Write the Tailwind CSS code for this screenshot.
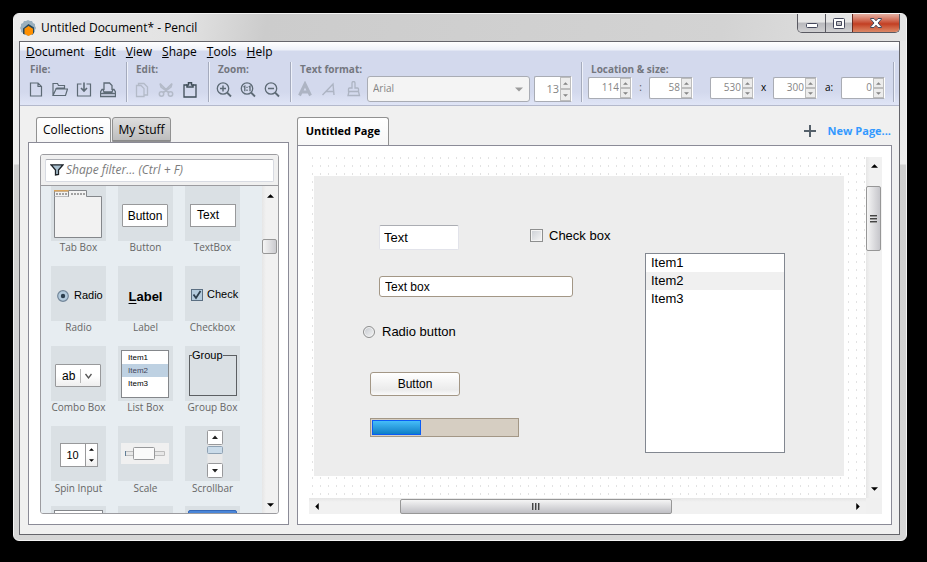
<!DOCTYPE html>
<html lang="en">
<head>
	<meta charset="UTF-8">
	<meta name="viewport" content="width=device-width, initial-scale=1.0">
	<title>Untitled Document* - Pencil</title>
	<script src="https://cdn.jsdelivr.net/npm/@tailwindcss/browser@4"></script>
</head>
<body class="bg-black font-['Open_Sans',sans-serif] text-xs text-black">
<!-- Shared arrow glyphs -->
<svg class="hidden">
	<symbol id="arrow-up" viewBox="0 0 8 4"><path d="M0 4 4 0 8 4z"></path></symbol>
	<symbol id="arrow-down" viewBox="0 0 8 4"><path d="M0 0h8L4 4z"></path></symbol>
	<symbol id="arrow-left" viewBox="0 0 4 8"><path d="M4 0v8L0 4z"></path></symbol>
	<symbol id="arrow-right" viewBox="0 0 4 8"><path d="M0 0v8l4-4z"></path></symbol>
</svg>

<div class="h-screen pt-[13px] pl-[13px] pr-5 pb-[21px]">
<div class="relative h-full flex flex-col rounded-md border border-[#f4f4f4] bg-[linear-gradient(#e4e4e4,#eeeeee_150px,#cfcfcf_151px,#d6d6d6)] pl-[5px] pr-[6px] pb-[5px]">

	<!-- Title bar -->
	<header class="h-[27px] -ml-[5px] -mr-[6px] shrink-0 flex items-center rounded-t-md bg-[linear-gradient(100deg,#ececec,#e2e2e2_170px,#cccccc_250px,#d3d3d3_700px,#e4e4e4)] pl-[6px]">
		<svg class="w-4 h-4" viewBox="0 0 16 16">
			<path d="M8 0l2 1 2 0 1 2 2 1 0 2 1 2-1 2 0 2-2 1-1 2-2 0-2 1-2-1-2 0-1-2-2-1 0-2-1-2 1-2 0-2 2-1 1-2 2 0z" fill="#9ab0be"></path>
			<path d="M3 14V8.500L8.500 4 14 7.500V13l-2 2V9L8.500 6.500 5 9v5z" fill="#26485c"></path>
			<path d="M8.500 6 13 8.700v5L8.500 16 4.500 13.700v-5z" fill="#ff9000"></path>
		</svg>
		<h1 class="pl-[5px]">Untitled Document* - Pencil</h1>
		<div class="ml-auto mr-[6px] self-start flex h-[19px] rounded-b-[5px] border border-t-0 border-[#5a5a62] overflow-hidden">
			<button aria-label="Minimize" class="w-7 flex items-center justify-center border-r border-[#5a5a62] bg-linear-to-b from-[#e6e6e6] from-45% via-[#b9b9bd] via-50% to-[#d0d0d2]">
				<svg class="w-3 h-3 mt-1" viewBox="0 0 12 12"><rect x=".5" y="4.500" width="11" height="4" rx="1" fill="#fff" stroke="#45485c"></rect></svg>
			</button>
			<button aria-label="Maximize" class="w-[27px] flex items-center justify-center border-r border-[#6b2a20] bg-linear-to-b from-[#e6e6e6] from-45% via-[#b9b9bd] via-50% to-[#d0d0d2]">
				<svg class="w-3 h-[11px]" viewBox="0 0 12 11"><path d="M1.500.5h9a1 1 0 0 1 1 1v8a1 1 0 0 1-1 1h-9a1 1 0 0 1-1-1v-8a1 1 0 0 1 1-1zM3.500 3.500v4h5v-4z" fill="#fff" fill-rule="evenodd" stroke="#45485c"></path></svg>
			</button>
			<button aria-label="Close" class="w-[46px] flex items-center justify-center bg-linear-to-b from-[#e3a798] from-5% via-[#c23e22] via-55% to-[#dc8866]">
				<svg class="w-3 h-[10px]" viewBox="0 0 12 10"><path d="M.5.5h3.500L6 2.800 8 .5h3.500v.6L8 5l3.500 3.900v.6H8L6 7.200 4 9.500H.5v-.6L4 5 .5 1.100z" fill="#fff" stroke="#45485c"></path></svg>
			</button>
		</div>
	</header>

	<div class="flex-1 min-h-0 flex flex-col border border-[#65656b] bg-[#f0f0f0]">

		<!-- Menu and toolbar -->
		<div class="shrink-0 border-b border-[#b4b9cc] bg-[linear-gradient(#ffffff,#eef1f9_8px,#d3d9ed_9px,#d3d9ed_50px,#e0e5f6)]">
			<nav class="h-5 flex items-center gap-[10px] pl-[6px]">
				<a href="#"><u>D</u>ocument</a>
				<a href="#"><u>E</u>dit</a>
				<a href="#"><u>V</u>iew</a>
				<a href="#"><u>S</u>hape</a>
				<a href="#"><u>T</u>ools</a>
				<a href="#"><u>H</u>elp</a>
			</nav>
			<div class="flex h-10 mb-[3px] text-[#5d6a75]">
				<section class="border-r border-[#a5abbd] shadow-[1px_0_0_#eef1fa] pl-1 pr-[6px]">
					<h2 class="h-4 pl-[6px] text-[10px] leading-[14px] font-bold text-[#74777f]">File:</h2>
					<div class="flex">
						<button aria-label="New" class="w-6 h-6 flex items-center justify-center">
							<svg class="w-4 h-4" viewBox="0 0 16 16" fill="none" stroke="currentColor" stroke-width="1.200"><path d="M2.500 1h7.500l3.500 3.500V14h-11zM10 1v3.500h3.500"></path></svg>
						</button>
						<button aria-label="Open" class="w-6 h-6 flex items-center justify-center">
							<svg class="w-4 h-4" viewBox="0 0 16 16" fill="none" stroke="currentColor" stroke-width="1.200"><path d="M1 13.500V1.500h4.500l1 2h6v3M1 13.500h12.500l2-6.500H4zM3.500 7l1.500-1h7.500"></path></svg>
						</button>
						<button aria-label="Save" class="w-6 h-6 flex items-center justify-center">
							<svg class="w-4 h-4" viewBox="0 0 16 16" fill="none" stroke="currentColor" stroke-width="1.200"><path d="M5.500 2h-4v12h13V2h-4"></path><path d="M8 .5v8M5 6l3 3 3-3" stroke-width="1.600"></path></svg>
						</button>
						<button aria-label="Print" class="w-6 h-6 flex items-center justify-center">
							<svg class="w-4 h-4" viewBox="0 0 16 16" fill="none" stroke="currentColor" stroke-width="1.300"><path d="M4 8V1h5.500L12 3.500V8M2 7.500h1l1 2.500h8l1-2.500h1l1.500 2.500v4.500H.5V10zM.5 11.500h15"></path></svg>
						</button>
					</div>
				</section>
				<section class="border-r border-[#a5abbd] shadow-[1px_0_0_#eef1fa] pl-[3px] pr-[6px]">
					<h2 class="h-4 pl-[6px] text-[10px] leading-[14px] font-bold text-[#74777f]">Edit:</h2>
					<div class="flex">
						<button aria-label="Copy" disabled class="w-6 h-6 flex items-center justify-center text-[#b3bac8]">
							<svg class="w-4 h-4" viewBox="0 0 16 16" fill="none" stroke="currentColor" stroke-width="1.300"><path d="M2.500 3.500h4.500L10 6.500v8H2.500zM4.500 3.500v-2H10L13.500 5v8H10"></path></svg>
						</button>
						<button aria-label="Cut" disabled class="w-6 h-6 flex items-center justify-center text-[#b3bac8]">
							<svg class="w-4 h-4" viewBox="0 0 16 16" fill="none" stroke="currentColor" stroke-width="1.500"><circle cx="3.500" cy="12" r="2.200"></circle><circle cx="12.500" cy="12" r="2.200"></circle><path d="M2 1.500 3 5l8 6M14 1.500 13 5l-8 6M2 1.500l9 9M14 1.500l-9 9"></path></svg>
						</button>
						<button aria-label="Paste" class="w-6 h-6 flex items-center justify-center text-[#3f4d58]">
							<svg class="w-4 h-4" viewBox="0 0 16 16" fill="none" stroke="currentColor" stroke-width="1.300"><path d="M5 3H2v12h12V3h-3"></path><path d="M5 5V3h1.500V.8h3V3H11v2z" stroke-width="1.500"></path></svg>
						</button>
					</div>
				</section>
				<section class="border-r border-[#a5abbd] shadow-[1px_0_0_#eef1fa] pl-[3px] pr-[6px]">
					<h2 class="h-4 pl-[6px] text-[10px] leading-[14px] font-bold text-[#74777f]">Zoom:</h2>
					<div class="flex">
						<button aria-label="Zoom in" class="w-6 h-6 flex items-center justify-center">
							<svg class="w-4 h-4" viewBox="0 0 16 16" fill="none" stroke="currentColor" stroke-width="1.300"><circle cx="7" cy="6.500" r="5.700"></circle><path d="M4 6.500h6M7 3.500v6" stroke-width="1.500"></path><path d="M11 10.500l4 4" stroke-width="1.800"></path></svg>
						</button>
						<button aria-label="Actual size" class="w-6 h-6 flex items-center justify-center">
							<svg class="w-4 h-4" viewBox="0 0 16 16" fill="none" stroke="currentColor" stroke-width="1.300"><circle cx="7" cy="6.500" r="5.700"></circle><path d="M3.500 5l1.300-.8v5M8.700 5l1.300-.8v5M7 4.800v1.300M7 7.600v1.300"></path><path d="M11 10.500l4 4" stroke-width="1.800"></path></svg>
						</button>
						<button aria-label="Zoom out" class="w-6 h-6 flex items-center justify-center">
							<svg class="w-4 h-4" viewBox="0 0 16 16" fill="none" stroke="currentColor" stroke-width="1.300"><circle cx="7" cy="6.500" r="5.700"></circle><path d="M4 6.500h6" stroke-width="1.500"></path><path d="M11 10.500l4 4" stroke-width="1.800"></path></svg>
						</button>
					</div>
				</section>
				<section class="border-r border-[#a5abbd] shadow-[1px_0_0_#eef1fa] pl-[2px] pr-[9px]">
					<h2 class="h-[14px] pl-[7px] text-[10px] leading-[14px] font-bold text-[#74777f]">Text format:</h2>
					<div class="flex items-center text-[#adb4c3]">
						<button aria-label="Bold" disabled class="w-6 h-6 flex items-center justify-center">
							<svg class="w-4 h-4" viewBox="0 0 16 16" fill="none" stroke="currentColor" stroke-width="3"><path d="M2.500 14.500 8 3l5.500 11.500M4.500 11h7"></path></svg>
						</button>
						<button aria-label="Italic" disabled class="w-6 h-6 flex items-center justify-center">
							<svg class="w-4 h-4" viewBox="0 0 16 16" fill="none" stroke="currentColor" stroke-width="1.400"><path d="M1.500 14 12 3l1 11M5 10.500h7.500"></path></svg>
						</button>
						<button aria-label="Format painter" disabled class="w-6 h-6 flex items-center justify-center">
							<svg class="w-4 h-4" viewBox="0 0 16 16" fill="none" stroke="currentColor" stroke-width="1.300"><path d="M7 7V2a1.500 1.500 0 0 1 3 0v5h2.500a1 1 0 0 1 1 1v2.500h-10V8a1 1 0 0 1 1-1zM4 10.500l-1 4h11.500l-1-4"></path></svg>
						</button>
						<div class="relative ml-[2px]">
							<select aria-label="Font" disabled class="w-[163px] h-[26px] appearance-none rounded-[3px] border border-[#a9acb4] bg-[#f4f4f4] pl-[5px] text-[10px] text-[#858585] opacity-100">
								<option>Arial</option>
							</select>
							<svg class="absolute right-[7px] top-[11px] w-2 h-[5px] fill-[#9b9b9b]"><use href="#arrow-down"></use></svg>
						</div>
						<div class="ml-1 flex w-[38px] h-[26px] rounded-l-xs border border-r-white border-[#a9acb4] bg-white">
							<input aria-label="Font size" disabled value="13" class="flex-1 min-w-0 pr-px text-right text-[11px] text-[#858585]">
							<div class="w-[11px] flex flex-col">
								<button aria-label="Larger" disabled class="flex-1 flex items-center justify-center border border-[#bdbdbd] bg-[#ececec]"><svg class="w-[5px] h-[3px] fill-[#858585]"><use href="#arrow-up"></use></svg></button>
								<button aria-label="Smaller" disabled class="flex-1 flex items-center justify-center border border-[#bdbdbd] bg-[#ececec]"><svg class="w-[5px] h-[3px] fill-[#858585]"><use href="#arrow-down"></use></svg></button>
							</div>
						</div>
					</div>
				</section>
				<section class="border-r border-[#a5abbd] shadow-[1px_0_0_#eef1fa] pl-[6px] pr-2">
					<h2 class="h-[15px] pl-[3px] text-[10px] leading-[14px] font-bold text-[#74777f]">Location &amp; size:</h2>
					<div class="flex items-center text-[10px] text-black">
						<div class="flex w-11 h-[22px] rounded-l-xs border border-r-white border-[#a9acb4] bg-white">
							<input aria-label="X" disabled value="114" class="flex-1 min-w-0 pr-px text-right text-[#858585]">
							<div class="w-[11px] flex flex-col">
								<button aria-label="Increase X" disabled class="flex-1 flex items-center justify-center border border-[#bdbdbd] bg-[#ececec]"><svg class="w-[5px] h-[3px] fill-[#858585]"><use href="#arrow-up"></use></svg></button>
								<button aria-label="Decrease X" disabled class="flex-1 flex items-center justify-center border border-[#bdbdbd] bg-[#ececec]"><svg class="w-[5px] h-[3px] fill-[#858585]"><use href="#arrow-down"></use></svg></button>
							</div>
						</div>
						<span class="w-[17px] text-center text-[#555555]">:</span>
						<div class="flex w-11 h-[22px] rounded-l-xs border border-r-white border-[#a9acb4] bg-white">
							<input aria-label="Y" disabled value="58" class="flex-1 min-w-0 pr-px text-right text-[#858585]">
							<div class="w-[11px] flex flex-col">
								<button aria-label="Increase Y" disabled class="flex-1 flex items-center justify-center border border-[#bdbdbd] bg-[#ececec]"><svg class="w-[5px] h-[3px] fill-[#858585]"><use href="#arrow-up"></use></svg></button>
								<button aria-label="Decrease Y" disabled class="flex-1 flex items-center justify-center border border-[#bdbdbd] bg-[#ececec]"><svg class="w-[5px] h-[3px] fill-[#858585]"><use href="#arrow-down"></use></svg></button>
							</div>
						</div>
						<div class="ml-[17px] flex w-11 h-[22px] rounded-l-xs border border-r-white border-[#a9acb4] bg-white">
							<input aria-label="Width" disabled value="530" class="flex-1 min-w-0 pr-px text-right text-[#858585]">
							<div class="w-[11px] flex flex-col">
								<button aria-label="Increase width" disabled class="flex-1 flex items-center justify-center border border-[#bdbdbd] bg-[#ececec]"><svg class="w-[5px] h-[3px] fill-[#858585]"><use href="#arrow-up"></use></svg></button>
								<button aria-label="Decrease width" disabled class="flex-1 flex items-center justify-center border border-[#bdbdbd] bg-[#ececec]"><svg class="w-[5px] h-[3px] fill-[#858585]"><use href="#arrow-down"></use></svg></button>
							</div>
						</div>
						<span class="w-[19px] text-center">x</span>
						<div class="flex w-11 h-[22px] rounded-l-xs border border-r-white border-[#a9acb4] bg-white">
							<input aria-label="Height" disabled value="300" class="flex-1 min-w-0 pr-px text-right text-[#858585]">
							<div class="w-[11px] flex flex-col">
								<button aria-label="Increase height" disabled class="flex-1 flex items-center justify-center border border-[#bdbdbd] bg-[#ececec]"><svg class="w-[5px] h-[3px] fill-[#858585]"><use href="#arrow-up"></use></svg></button>
								<button aria-label="Decrease height" disabled class="flex-1 flex items-center justify-center border border-[#bdbdbd] bg-[#ececec]"><svg class="w-[5px] h-[3px] fill-[#858585]"><use href="#arrow-down"></use></svg></button>
							</div>
						</div>
						<label for="angle" class="w-6 text-center">a:</label>
						<div class="flex w-11 h-[22px] rounded-l-xs border border-r-white border-[#a9acb4] bg-white">
							<input id="angle" disabled value="0" class="flex-1 min-w-0 pr-px text-right text-[#858585]">
							<div class="w-[11px] flex flex-col">
								<button aria-label="Increase angle" disabled class="flex-1 flex items-center justify-center border border-[#bdbdbd] bg-[#ececec]"><svg class="w-[5px] h-[3px] fill-[#858585]"><use href="#arrow-up"></use></svg></button>
								<button aria-label="Decrease angle" disabled class="flex-1 flex items-center justify-center border border-[#bdbdbd] bg-[#ececec]"><svg class="w-[5px] h-[3px] fill-[#858585]"><use href="#arrow-down"></use></svg></button>
							</div>
						</div>
					</div>
				</section>
			</div>
		</div>

		<div class="flex-1 min-h-0 flex gap-2 pt-[11px] pl-2 pr-[7px] pb-[9px]">

			<!-- Shape collections -->
			<aside class="w-[261px] shrink-0 flex flex-col">
				<div class="flex gap-px pl-2">
					<button class="w-[75px] h-[25px] rounded-t-[3px] border border-b-0 border-[#919191] bg-linear-to-b from-white to-[#f7f7f7]">Collections</button>
					<button class="w-[59px] h-[25px] rounded-t-[3px] border border-[#919191] bg-linear-to-b from-[#dedede] to-[#bcbcbc] shadow-[inset_0_-1px_0_#8a8a8a]">My Stuff</button>
				</div>
				<div class="flex-1 min-h-0 border border-[#8b8b97] bg-white pt-[11px] pl-[11px] pr-[9px] pb-[10px]">
					<div class="h-full flex flex-col overflow-hidden rounded-[3px] border border-[#9c9ca0]">
						<div class="h-[31px] shrink-0 flex items-center border-b border-[#9c9ca0] bg-[#f0f0f0] px-1">
							<div class="w-full h-[23px] flex items-center rounded-xs border border-[#d8dbe2] border-t-[#abadb3] bg-white pl-1">
								<svg class="w-[14px] h-3 shrink-0" viewBox="0 0 14 12"><path d="M1 .8h12L8.500 6v4.500L5.500 11V6z" fill="#a9c0cf" stroke="#1d2328" stroke-width="1.300"></path></svg>
								<input aria-label="Shape filter" placeholder="Shape filter... (Ctrl + F)" class="flex-1 min-w-0 pl-[2px] italic placeholder:text-[#7c7c7c] outline-none">
							</div>
						</div>
						<div class="flex-1 min-h-0 flex">
							<div class="flex-1 overflow-hidden bg-[#e7edf1] pl-[10px]">
								<div class="grid grid-cols-[55px_55px_55px] gap-x-3 gap-y-2 text-[10px] text-[#666666]">
									<figure>
										<div class="h-[55px] flex bg-[#dae0e4] pl-[3px] pt-1">
											<svg class="w-12 h-12" viewBox="0 0 48 48"><path d="M.5 6.500h14v-6h18v6h15v41H.5z" fill="#f2f2f2" stroke="#84878b"></path><path d="M.5 6.500V1h14v5.500" fill="#f2f2f2" stroke="#84878b"></path><path d="M0 .5h14.500" stroke="#d9a45c" stroke-width="2"></path><path d="M2 4h11M17 4h14" stroke="#a2a2a2" stroke-width="2" stroke-dasharray="2 1"></path></svg>
										</div>
										<figcaption class="h-[17px] leading-3 text-center whitespace-nowrap">Tab Box</figcaption>
									</figure>
									<figure>
										<div class="h-[55px] flex items-center bg-[#dae0e4] pl-1 pt-1">
											<div class="w-[46px] h-[23px] rounded-[1px] border border-[#98999b] bg-white text-center leading-[22px] font-['Liberation_Sans',sans-serif] text-xs text-black">Button</div>
										</div>
										<figcaption class="h-[17px] leading-3 text-center whitespace-nowrap">Button</figcaption>
									</figure>
									<figure>
										<div class="h-[55px] flex items-center bg-[#dae0e4] pl-[5px] pt-1">
											<div class="w-[46px] h-[23px] border border-[#98999b] bg-white pl-[6px] leading-[21px] font-['Liberation_Sans',sans-serif] text-xs text-black">Text</div>
										</div>
										<figcaption class="h-[17px] leading-3 text-center whitespace-nowrap">TextBox</figcaption>
									</figure>

									<figure>
										<div class="h-[55px] flex items-center gap-[5px] bg-[#dae0e4] pl-[6px] pt-1">
											<svg class="w-3 h-3 shrink-0" viewBox="0 0 12 12"><circle cx="6" cy="6" r="5.300" fill="#b4cbdd" stroke="#73879a" stroke-width="1.200"></circle><circle cx="6" cy="6" r="2.200" fill="#2d3f4e"></circle></svg>
											<span class="font-['Liberation_Sans',sans-serif] text-[11px] text-black">Radio</span>
										</div>
										<figcaption class="h-[17px] leading-3 text-center whitespace-nowrap">Radio</figcaption>
									</figure>
									<figure>
										<div class="h-[55px] flex items-center justify-center bg-[#dae0e4] pt-[6px]">
											<span class="font-['Liberation_Sans',sans-serif] text-[13px] font-bold text-black"><u class="underline-offset-2">L</u>abel</span>
										</div>
										<figcaption class="h-[17px] leading-3 text-center whitespace-nowrap">Label</figcaption>
									</figure>
									<figure>
										<div class="h-[55px] flex items-center gap-1 bg-[#dae0e4] pl-[6px] pt-[2px]">
											<svg class="w-3 h-3 shrink-0" viewBox="0 0 12 12"><rect x=".5" y=".5" width="11" height="11" fill="#b4cbdd" stroke="#5b6f82"></rect><path d="M2.500 5.500 5 9l4.500-7" fill="none" stroke="#2d3f4e" stroke-width="1.800"></path></svg>
											<span class="font-['Liberation_Sans',sans-serif] text-[11px] text-black">Check</span>
										</div>
										<figcaption class="h-[17px] leading-3 text-center whitespace-nowrap">Checkbox</figcaption>
									</figure>

									<figure>
										<div class="h-[55px] flex items-center bg-[#dae0e4] pl-1 pt-1">
											<div class="w-[46px] h-[23px] flex items-center rounded-[1px] border border-[#98999b] bg-linear-to-b from-white from-50% to-[#eeeeee] pl-[6px]">
												<span class="w-[18px] font-['Liberation_Sans',sans-serif] text-xs text-black">ab</span>
												<svg class="w-3 h-[14px]" viewBox="0 0 12 14" fill="none"><path d="M.5 0v14" stroke="#b5b5b5"></path><path d="M5.500 5 8.500 9l3-4" stroke="#555" stroke-width="1.300"></path></svg>
											</div>
										</div>
										<figcaption class="h-[17px] leading-3 text-center whitespace-nowrap">Combo Box</figcaption>
									</figure>
									<figure>
										<div class="h-[55px] flex bg-[#dae0e4] pl-[3px] pt-1">
											<div class="w-12 h-12 border border-[#84878b] bg-white font-['Liberation_Sans',sans-serif] text-[8px] leading-[13px] text-black">
												<div class="pl-[6px]">Item1</div>
												<div class="bg-[#bed1e2] pl-[6px] text-[#44445a]">Item2</div>
												<div class="pl-[6px]">Item3</div>
											</div>
										</div>
										<figcaption class="h-[17px] leading-3 text-center whitespace-nowrap">List Box</figcaption>
									</figure>
									<figure>
										<div class="h-[55px] bg-[#dae0e4] pl-1 pr-[3px] pt-[3px]">
											<fieldset class="h-[47px] border border-[#5c5f62]">
												<legend class="ml-[2px] font-['Liberation_Sans',sans-serif] text-[11px] leading-3 text-black">Group</legend>
											</fieldset>
										</div>
										<figcaption class="h-[17px] leading-3 text-center whitespace-nowrap">Group Box</figcaption>
									</figure>

									<figure>
										<div class="h-[55px] flex items-center justify-center bg-[#dae0e4] pt-[2px]">
											<div class="w-[38px] h-6 flex border border-[#98999b] bg-white">
												<span class="w-[25px] border-r border-[#98999b] text-center leading-[23px] font-['Liberation_Sans',sans-serif] text-[11px] text-black">10</span>
												<div class="flex-1 flex flex-col items-center justify-around bg-linear-to-b from-white from-50% to-[#eeeeee]">
													<svg class="w-[5px] h-[3px]"><use href="#arrow-up"></use></svg>
													<svg class="w-[5px] h-[3px]"><use href="#arrow-down"></use></svg>
												</div>
											</div>
										</div>
										<figcaption class="h-[17px] leading-[14px] text-center whitespace-nowrap">Spin Input</figcaption>
									</figure>
									<figure>
										<div class="h-[55px] flex items-center bg-[#dae0e4] pl-[3px]">
											<svg class="w-12 h-[21px]" viewBox="0 0 48 21"><path d="M0 0h48v21H0z" fill="#f0f0f0"></path><path d="M4.500 8.500h39v4h-39z" fill="#e7e7e7" stroke="#bdbdbd"></path><path d="M4.500 8v5" stroke="#5f7d96"></path><rect x="12.500" y="4.500" width="21" height="12" rx="1" fill="#fafafa" stroke="#98999b"></rect></svg>
										</div>
										<figcaption class="h-[17px] leading-[14px] text-center whitespace-nowrap">Scale</figcaption>
									</figure>
									<figure>
										<div class="h-[55px] flex items-center justify-center bg-[#dae0e4] pl-1">
											<svg class="w-4 h-12" viewBox="0 0 16 48"><path d="M.5 0h15v48H.5z" fill="#e9e9e9"></path><rect x=".5" y=".5" width="15" height="14" rx="1" fill="#fff" stroke="#98999b"></rect><rect x=".5" y="33.500" width="15" height="14" rx="1" fill="#fff" stroke="#98999b"></rect><rect x=".5" y="16.500" width="15" height="7" rx="1" fill="#cadbe9" stroke="#8fa2b3"></rect><path d="M5 9 8 5.500 11 9zM5 39h6l-3 3.500z" fill="#222"></path></svg>
										</div>
										<figcaption class="h-[17px] leading-[14px] text-center whitespace-nowrap">Scrollbar</figcaption>
									</figure>

									<div class="h-[55px] bg-[#dae0e4] px-[3px] pt-1"><div class="h-12 border border-[#84878b] bg-white"></div></div>
									<div class="h-[55px] bg-[#dae0e4]"></div>
									<div class="h-[55px] bg-[#dae0e4] px-[3px] pt-1"><div class="h-12 rounded-t-xs border border-[#3568b8] bg-[#4a86d8]"></div></div>
								</div>
							</div>
							<div class="w-4 shrink-0 flex flex-col items-center bg-[linear-gradient(90deg,#e6e6e6,#f1f1f1_4px)] pt-2 pb-[6px]">
								<svg class="w-[7px] h-1"><use href="#arrow-up"></use></svg>
								<div class="mt-[41px] w-[15px] h-[15px] self-start rounded-xs border border-[#979797] bg-linear-to-r from-[#f5f5f5] to-[#cbcbcf]"></div>
								<svg class="mt-auto w-[7px] h-1"><use href="#arrow-down"></use></svg>
							</div>
						</div>
					</div>
				</div>
			</aside>

			<!-- Document page -->
			<main class="flex-1 min-w-0 flex flex-col">
				<div class="flex justify-between">
					<button class="w-[92px] h-[28px] rounded-t-[3px] border border-b-0 border-[#919191] bg-linear-to-b from-white to-[#f7f7f7] text-[11px] font-bold">Untitled Page</button>
					<button class="flex items-center gap-3 pr-px text-[11px] font-bold text-[#3399ff]">
						<svg class="w-3 h-3" viewBox="0 0 12 12"><path d="M6 0v12M0 6h12" stroke="#55606a" stroke-width="2"></path></svg>
						New Page...
					</button>
				</div>
				<div class="flex-1 min-h-0 grid grid-cols-[1fr_16px] grid-rows-[1fr_16px] border border-[#8b8b97] bg-white pt-[11px] pl-[11px] pr-[9px] pb-[10px]">
					<div class="overflow-hidden bg-[conic-gradient(from_90deg_at_7px_6px,#e2e2e2_90deg,transparent_0)] bg-[size:8px_8px] bg-[position:-4px_-6px] pl-[5px] pt-[19px]">
						<div class="relative w-[530px] h-[300px] bg-[#ededed] font-['Liberation_Sans',sans-serif] text-[13px]">
							<input aria-label="Text" value="Text" class="absolute left-[65px] top-[49px] w-20 h-[25px] rounded-xs border border-[#e2e3ea] border-t-[#abadb3] bg-white pl-1">
							<input aria-label="Text box" value="Text box" class="absolute left-[65px] top-[100px] w-[194px] h-[21px] rounded-[3px] border border-[#a39786] bg-white pl-[5px] text-xs">
							<label class="absolute left-[216px] top-[51px] flex items-center gap-[6px]">
								<input type="checkbox" class="w-[13px] h-[13px] appearance-none border border-[#8e8f8f] bg-linear-to-br from-[#cbcfd5] to-[#f6f6f6] shadow-[inset_0_0_0_1px_#f4f4f4]">
								Check box
							</label>
							<label class="absolute left-[49px] top-[147px] flex items-center gap-[7px]">
								<input type="radio" name="page-radio" class="w-3 h-3 appearance-none rounded-full border border-[#8e8f8f] bg-linear-to-br from-[#c3c7cd] to-[#f6f6f6] shadow-[inset_0_0_0_1px_#f4f4f4]">
								Radio button
							</label>
							<button class="absolute left-[56px] top-[196px] w-[90px] h-6 rounded-[3px] border border-[#a39786] bg-linear-to-b from-white via-[#ebebeb] via-75% to-[#fafafa] text-xs">Button</button>
							<div role="progressbar" aria-label="Progress" class="absolute left-[56px] top-[242px] w-[149px] h-[19px] border border-[#a39786] bg-[#d6cec2] p-px">
								<div class="h-full border border-[#0a5cf5] bg-linear-to-b from-[#45bdf8] to-[#0b7fc6]" style="width: 34%"></div>
							</div>
							<ul role="listbox" aria-label="Items" class="absolute left-[331px] top-[77px] w-[140px] h-[200px] border border-[#828790] bg-white leading-[18px]">
								<li role="option" class="pl-[5px]">Item1</li>
								<li role="option" class="bg-[#f0f0f0] pl-[5px]">Item2</li>
								<li role="option" class="pl-[5px]">Item3</li>
							</ul>
						</div>
					</div>
					<div class="flex flex-col items-center bg-[linear-gradient(90deg,#e6e6e6,#f1f1f1_4px)] pt-[7px] pb-[7px]">
						<svg class="w-[7px] h-1"><use href="#arrow-up"></use></svg>
						<div class="mt-[18px] w-[15px] h-[65px] self-start flex flex-col items-center justify-center gap-px rounded-xs border border-[#979797] bg-linear-to-r from-[#f5f5f5] to-[#c6c6cb]">
							<span class="w-[7px] h-[2px] border-t border-[#444444] bg-[#999999]"></span>
							<span class="w-[7px] h-[2px] border-t border-[#444444] bg-[#999999]"></span>
							<span class="w-[7px] h-[2px] border-t border-[#444444] bg-[#999999]"></span>
						</div>
						<svg class="mt-auto w-[7px] h-1"><use href="#arrow-down"></use></svg>
					</div>
					<div class="flex items-center bg-[linear-gradient(#e6e6e6,#f1f1f1_4px)] px-[6px]">
						<svg class="w-1 h-[7px]"><use href="#arrow-left"></use></svg>
						<div class="ml-[81px] w-[272px] h-[15px] flex items-center justify-center gap-px rounded-xs border border-[#979797] bg-linear-to-b from-[#f5f5f5] to-[#c0c0c5]">
							<span class="w-[2px] h-[7px] border-l border-[#444444] bg-[#999999]"></span>
							<span class="w-[2px] h-[7px] border-l border-[#444444] bg-[#999999]"></span>
							<span class="w-[2px] h-[7px] border-l border-[#444444] bg-[#999999]"></span>
						</div>
						<svg class="ml-auto w-1 h-[7px]"><use href="#arrow-right"></use></svg>
					</div>
					<div class="bg-[#f0f0f0]"></div>
				</div>
			</main>
		</div>
	</div>
</div>
</div>
</body>
</html>
